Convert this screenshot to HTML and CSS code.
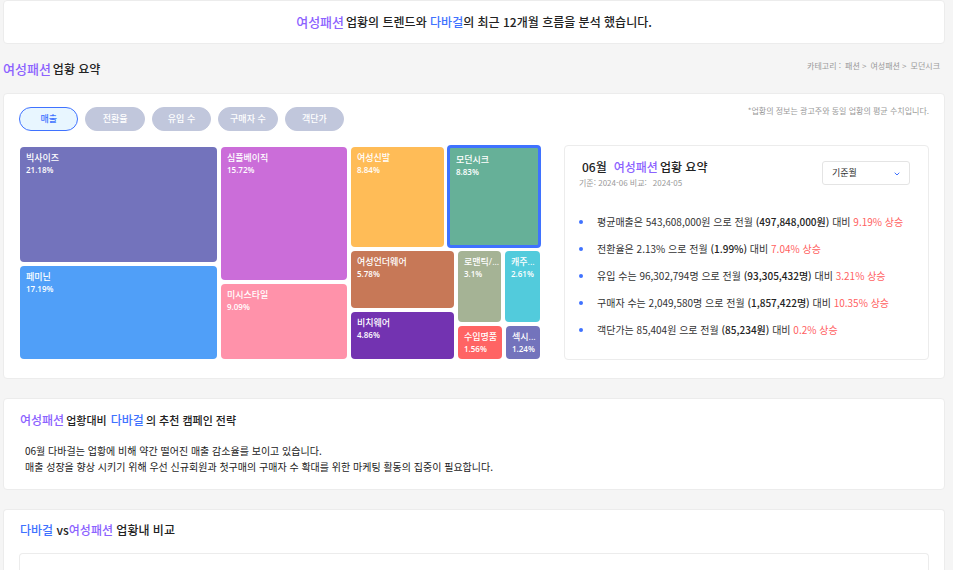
FILE: index.html
```html
<!DOCTYPE html>
<html lang="ko">
<head>
<meta charset="utf-8">
<meta name="viewport" content="width=device-width, initial-scale=1">
<title>여성패션 업황 요약</title>
<link rel="stylesheet" href="styles.css">
</head>
<body>
<main class="page">
  <section class="card intro">
    <p class="title"><span class="title-lg purple">여성패션</span><span>업황의 트렌드와 <span class="blue">다바걸</span>의 최근 12개월 흐름을 분석 했습니다.</span></p>
  </section>

  <header class="page-head">
    <h1 class="title"><span class="title-lg purple">여성패션</span><span>업황 요약</span></h1>
    <nav class="crumbs" aria-label="카테고리">
      <span>카테고리 :</span><span>패션 &gt;</span><span>여성패션 &gt;</span><span>모던시크</span>
    </nav>
  </header>

  <section class="card overview">
    <div class="toolbar">
      <div class="tabs">
        <button type="button" class="tab tab-active">매출</button>
        <button type="button" class="tab">전환율</button>
        <button type="button" class="tab">유입 수</button>
        <button type="button" class="tab">구매자 수</button>
        <button type="button" class="tab">객단가</button>
      </div>
      <p class="note">*업황의 정보는 광고주와 동일 업황의 평균 수치입니다.</p>
    </div>

    <div class="columns">
      <div class="treemap">
        <div class="stack stack-first">
          <div class="tile indigo"><span>빅사이즈</span><span class="share">21.18%</span></div>
          <div class="tile sky"><span>페미닌</span><span class="share">17.19%</span></div>
        </div>
        <div class="stack stack-second">
          <div class="tile orchid"><span>심플베이직</span><span class="share">15.72%</span></div>
          <div class="tile pink"><span>미시스타일</span><span class="share">9.09%</span></div>
        </div>
        <div class="stack stack-third">
          <div class="pair pair-top">
            <div class="tile amber"><span>여성신발</span><span class="share">8.84%</span></div>
            <div class="tile green tile-selected"><span>모던시크</span><span class="share">8.83%</span></div>
          </div>
          <div class="pair pair-bottom">
            <div class="stack stack-wear">
              <div class="tile rust"><span>여성언더웨어</span><span class="share">5.78%</span></div>
              <div class="tile violet"><span>비치웨어</span><span class="share">4.86%</span></div>
            </div>
            <div class="stack stack-small">
              <div class="pair pair-mid">
                <div class="tile sage"><span>로맨틱/...</span><span class="share">3.1%</span></div>
                <div class="tile aqua"><span>캐주...</span><span class="share">2.61%</span></div>
              </div>
              <div class="pair pair-low">
                <div class="tile coral"><span>수입명품</span><span class="share">1.56%</span></div>
                <div class="tile indigo"><span>섹시...</span><span class="share">1.24%</span></div>
              </div>
            </div>
          </div>
        </div>
      </div>

      <article class="summary">
        <header class="summary-head">
          <div>
            <h2 class="title summary-title"><span>06월</span><span class="purple">여성패션</span><span>업황 요약</span></h2>
            <p class="period"><span>기준: 2024-06 비교:</span><span>2024-05</span></p>
          </div>
          <div class="picker">
            <select aria-label="기준월"><option>기준월</option></select>
            <svg class="chevron" viewBox="0 0 6 4" aria-hidden="true"><path d="M.7 .7 3 3 5.300 .7"/></svg>
          </div>
        </header>
        <ul class="facts">
          <li>평균매출은 543,608,000원 으로 전월 <strong>(497,848,000원)</strong> 대비 <em>9.19% 상승</em></li>
          <li>전환율은 2.13% 으로 전월 <strong>(1.99%)</strong> 대비 <em>7.04% 상승</em></li>
          <li>유입 수는 96,302,794명 으로 전월 <strong>(93,305,432명)</strong> 대비 <em>3.21% 상승</em></li>
          <li>구매자 수는 2,049,580명 으로 전월 <strong>(1,857,422명)</strong> 대비 <em>10.35% 상승</em></li>
          <li>객단가는 85,404원 으로 전월 <strong>(85,234원)</strong> 대비 <em>0.2% 상승</em></li>
        </ul>
      </article>
    </div>
  </section>

  <section class="card strategy">
    <h2 class="title title-sm"><span class="title-md purple">여성패션</span><span>업황대비</span> <span class="title-md blue">다바걸</span><span>의 추천 캠페인 전략</span></h2>
    <p class="advice">06월 다바걸는 업황에 비해 약간 떨어진 매출 감소율를 보이고 있습니다.<br>매출 성장을 향상 시키기 위해 우선 신규회원과 첫구매의 구매자 수 확대를 위한 마케팅 활동의 집중이 필요합니다.</p>
  </section>

  <section class="card compare">
    <h2 class="title"><span class="blue">다바걸</span> <span>vs</span><span class="purple">여성패션</span> <span>업황내 비교</span></h2>
    <div class="compare-box"></div>
  </section>
</main>
</body>
</html>
```
FILE: styles.css
```css
* { box-sizing: border-box; }

html { background: #fff; }

body {
  margin: 0;
  padding-right: 7px;
  color: #222;
  font-family: "Noto Sans CJK KR", sans-serif;
  font-size: 11px;
  line-height: 16px;
}

h1, h2, p, ul { margin: 0; padding: 0; }

.page {
  display: flex;
  flex-direction: column;
  gap: 19px;
  min-height: 100vh;
  padding: 0 8px 0 3px;
  background: #f5f5f5;
}

.card {
  padding: 13px 15px 18px;
  background: #fff;
  border: 1px solid #ececec;
  border-radius: 4px;
}

.purple { color: #8c62ff; }
.blue { color: #3f72ff; }

.title {
  font-size: 12px;
  font-weight: 500;
  line-height: 20px;
}
.title-lg { margin-right: 2px; font-size: 13px; }
.title-sm { font-size: 11px; }
.title-md { margin-right: 2px; font-size: 12px; }
.title-md.blue { margin-left: 1px; }

.intro { padding: 11px 15px; text-align: center; }

.page-head {
  display: flex;
  align-items: flex-start;
  justify-content: space-between;
  margin: -4px 0 -5px;
  padding-right: 5px;
}
.crumbs {
  display: flex;
  gap: 4px;
  color: #999;
  font-size: 8px;
  line-height: 14px;
}

.toolbar {
  display: flex;
  justify-content: space-between;
}
.tabs { display: flex; gap: 7px; width: 325px; }
.tab {
  flex: 1;
  height: 24px;
  padding: 0;
  color: #fff;
  background: #c1c7dc;
  border: 1px solid #c1c7dc;
  border-radius: 12px;
  font: 500 9px/22px "Noto Sans CJK KR", sans-serif;
}
.tab-active {
  color: #3f72ff;
  background: #e8f6ff;
  border-color: #3f72ff;
}
.note { color: #999; font-size: 8px; line-height: 8px; }

.columns {
  display: grid;
  grid-template-columns: 522fr 365fr;
  gap: 23px;
  margin-top: 14px;
}

.treemap {
  display: grid;
  grid-template-columns: 197fr 126fr 189fr;
  gap: 4px;
  padding: 2px 1px 1px;
}
.stack, .pair { display: grid; gap: 4px; min-width: 0; min-height: 0; }
.stack-first { grid-template-rows: 115fr 93fr; }
.stack-second { grid-template-rows: 133fr 75fr; }
.stack-third { grid-template-rows: 100fr 108fr; }
.stack-wear { grid-template-rows: 57fr 47fr; }
.stack-small { grid-template-rows: 71fr 33fr; }
.pair-top { grid-template-columns: 93fr 92fr; }
.pair-bottom { grid-template-columns: 103fr 82fr; }
.pair-mid { grid-template-columns: 43fr 35fr; }
.pair-low { grid-template-columns: 44fr 34fr; }

.tile {
  display: flex;
  flex-direction: column;
  min-width: 0;
  padding: 5px 0 0 6px;
  color: #fff;
  border-radius: 4px;
  font-family: "Open Sans", "Noto Sans CJK KR", sans-serif;
  font-size: 9px;
  font-weight: 500;
  line-height: 12px;
  white-space: nowrap;
}
.share { font-size: 8px; font-weight: 600; }
.tile-selected {
  margin: -2px -1px -1px;
  padding-top: 6px;
  border: 3px solid #3f72ff;
}
.indigo { background: #7373bc; }
.sky { background: #509ff8; }
.orchid { background: #cb6dd9; }
.pink { background: #ff92aa; }
.amber { background: #ffbc57; }
.green { background: #66b098; }
.rust { background: #c77857; }
.violet { background: #7333b1; }
.sage { background: #a5b395; }
.aqua { background: #52cbdc; }
.coral { background: #ff6464; }

.summary {
  padding: 11px 18px 21px 14px;
  border: 1px solid #ececec;
  border-radius: 4px;
}
.summary-head {
  display: flex;
  align-items: center;
  justify-content: space-between;
}
.summary-title { display: flex; padding-left: 3px; }
.summary-title .purple { margin: 0 2px 0 7px; }
.period {
  display: flex;
  gap: 6px;
  color: #999;
  font-size: 8px;
  line-height: 12px;
}
.picker { position: relative; width: 88px; }
.picker select {
  width: 100%;
  height: 24px;
  padding: 0 9px;
  color: #333;
  background: #fff;
  border: 1px solid #e4e4e4;
  border-radius: 3px;
  font: 9px/20px "Noto Sans CJK KR", sans-serif;
  appearance: none;
}
.chevron {
  position: absolute;
  top: 11px;
  right: 10px;
  width: 6px;
  height: 4px;
  fill: none;
  stroke: #3f72ff;
  pointer-events: none;
}

.facts {
  display: grid;
  gap: 11px;
  margin-top: 25px;
  color: #333;
  font-size: 10px;
  list-style: none;
}
.facts li { display: flow-root; }
.facts li::before {
  content: "";
  float: left;
  width: 4px;
  height: 4px;
  margin: 6px 14px 0 0;
  background: #3f72ff;
  border-radius: 50%;
}
.facts strong { color: #222; font-weight: 500; }
.facts em { color: #ff5f5f; font-style: normal; }

.strategy { padding: 11px 16px 14px; }
.advice { margin-top: 13px; padding-left: 5px; color: #222; font-size: 10px; }

.compare {
  display: flex;
  flex: 1;
  flex-direction: column;
  padding-top: 10px;
  padding-bottom: 0;
  border-bottom: 0;
  border-radius: 4px 4px 0 0;
}
.compare .title { padding-left: 1px; }
.compare-box {
  flex: 1;
  margin-top: 13px;
  border: 1px solid #ececec;
  border-bottom: 0;
  border-radius: 4px 4px 0 0;
}
```
